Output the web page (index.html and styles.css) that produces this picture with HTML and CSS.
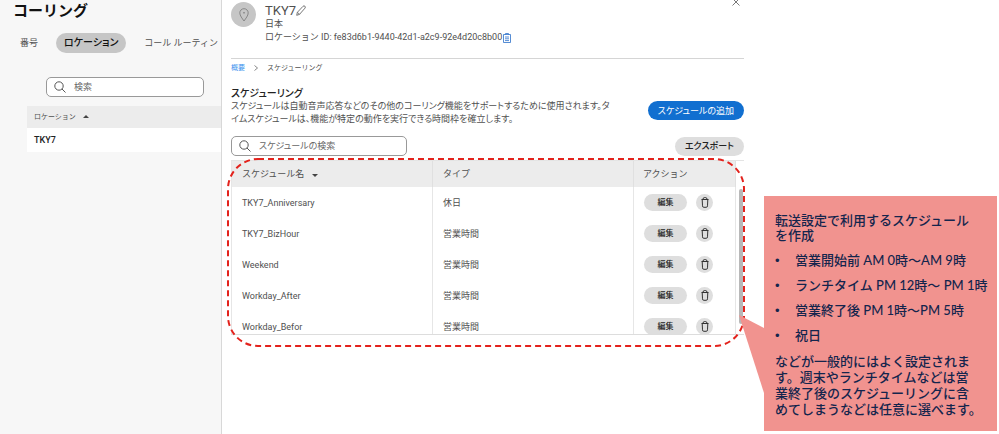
FILE: index.html
```html
<!DOCTYPE html>
<html lang="ja">
<head>
<meta charset="utf-8">
<title>コーリング</title>
<link rel="stylesheet" href="styles.css">
</head>
<body>
<svg class="defs" aria-hidden="true">
  <symbol id="search" viewBox="0 0 12 12"><circle cx="5" cy="5" r="4.2"/><path d="M8 8l3.5 3.5"/></symbol>
  <symbol id="trash" viewBox="0 0 8 11"><path d="M.5 2.5h7M2 2.300Q2 .6 3.300.6h1.400Q6 .6 6 2.300M1.200 2.600l.3 6.200q0 1.500 1.300 1.500h2.400q1.300 0 1.300-1.500l.3-6.200"/></symbol>
</svg>
<div class="page">
  <aside class="side">
    <h1>コーリング</h1>
    <nav class="tabs">
      <a href="#">番号</a>
      <a href="#" class="active">ロケーション</a>
      <a href="#">コール ルーティン</a>
    </nav>
    <label class="search side-search">
      <svg><use href="#search"/></svg>
      <input type="text" placeholder="検索" aria-label="検索">
    </label>
    <table class="locations">
      <thead><tr><th>ロケーション <i class="up"></i></th></tr></thead>
      <tbody><tr><td>TKY7</td></tr></tbody>
    </table>
  </aside>

  <main class="panel">
    <header class="head">
      <span class="avatar"><svg viewBox="0 0 10 14"><path d="M5 13C3.2 10.4.8 7.6.8 4.9a4.2 4.2 0 018.4 0C9.2 7.6 6.800 10.4 5 13z"/><circle cx="5" cy="4.800" r=".5"/></svg></span>
      <div class="info">
        <h2>TKY7<svg class="pencil" viewBox="0 0 10 11"><path d="M.7 10.300l.7-3L7 1.300q1-.9 1.900-.1t.1 1.900L3.500 9.400zM1.500 7.300l2 2"/></svg></h2>
        <p>日本</p>
        <p class="id">ロケーション ID: fe83d6b1-9440-42d1-a2c9-92e4d20c8b00<svg class="clip" viewBox="0 0 8 10"><path d="M.5 1.500h7v8h-7zM2.500 1.500V.5h3v1M2 4h4M2 5.800h4M2 7.600h4"/></svg></p>
      </div>
      <button class="close" aria-label="閉じる"><svg viewBox="0 0 8 8"><path d="M.5.5l7 7M7.500.5l-7 7"/></svg></button>
    </header>
    <nav class="crumbs">
      <a href="#">概要</a>
      <svg viewBox="0 0 4 6"><path d="M.5.5L3.500 3 .5 5.500"/></svg>
      <span>スケジューリング</span>
    </nav>
    <section class="intro">
      <div>
        <h3>スケジューリング</h3>
        <p>スケジュールは自動音声応答などのその他のコーリング機能をサポートするために使用されます。タ<br>イムスケジュールは、機能が特定の動作を実行できる時間枠を確立します。</p>
      </div>
      <button class="primary">スケジュールの追加</button>
    </section>
    <div class="tools">
      <label class="search table-search">
        <svg><use href="#search"/></svg>
        <input type="text" placeholder="スケジュールの検索" aria-label="スケジュールの検索">
      </label>
      <button class="export">エクスポート</button>
    </div>
    <div class="list">
      <div class="scroll">
        <table class="schedules">
          <thead><tr><th>スケジュール名 <i class="down"></i></th><th>タイプ</th><th class="act">アクション</th></tr></thead>
          <tbody>
            <tr><td>TKY7_Anniversary</td><td>休日</td><td><div class="actions"><button class="edit">編集</button><button class="del" aria-label="削除"><svg><use href="#trash"/></svg></button></div></td></tr>
            <tr><td>TKY7_BizHour</td><td>営業時間</td><td><div class="actions"><button class="edit">編集</button><button class="del" aria-label="削除"><svg><use href="#trash"/></svg></button></div></td></tr>
            <tr><td>Weekend</td><td>営業時間</td><td><div class="actions"><button class="edit">編集</button><button class="del" aria-label="削除"><svg><use href="#trash"/></svg></button></div></td></tr>
            <tr><td>Workday_After</td><td>営業時間</td><td><div class="actions"><button class="edit">編集</button><button class="del" aria-label="削除"><svg><use href="#trash"/></svg></button></div></td></tr>
            <tr><td>Workday_Befor</td><td>営業時間</td><td><div class="actions"><button class="edit">編集</button><button class="del" aria-label="削除"><svg><use href="#trash"/></svg></button></div></td></tr>
          </tbody>
        </table>
        <div class="track"><div class="thumb"></div></div>
      </div>
      <svg class="outline"><rect x="1" y="1" rx="30"/></svg>
    </div>
  </main>

  <aside class="note">
    <svg class="tail" viewBox="0 0 25 78"><path d="M0 0l25 13v65z"/></svg>
    <p>転送設定で利用するスケジュール<br>を作成</p>
    <ul>
      <li>営業開始前 AM 0時〜AM 9時</li>
      <li>ランチタイム PM 12時〜 PM 1時</li>
      <li>営業終了後 PM 1時〜PM 5時</li>
      <li>祝日</li>
    </ul>
    <p class="last">などが一般的にはよく設定されま<br>す。週末やランチタイムなどは営<br>業終了後のスケジューリングに含<br>めてしまうなどは任意に選べます。</p>
  </aside>
</div>
</body>
</html>
```
FILE: styles.css
```css
* { box-sizing: border-box; }
body {
  margin: 0;
  background: #fff;
  color: #505050;
  font: 9px/12px Roboto, "Noto Sans CJK JP", sans-serif;
}
h1, h2, h3, p, ul { margin: 0; padding: 0; }
a { color: inherit; text-decoration: none; }
button { border: 0; padding: 0; font: inherit; color: #222; white-space: nowrap; }
table { border-collapse: collapse; }
th, td { text-align: left; font-weight: 400; padding: 0; }
svg { fill: none; stroke: #555; flex: none; }
.defs { position: absolute; width: 0; height: 0; }
.page {
  display: grid;
  grid-template-columns: 222px minmax(0, 1fr) 255px;
  min-height: 100vh;
}

.side { background: #f7f7f7; border-right: 1px solid #d8d8d8; overflow: hidden; }
.side h1 { margin-left: 13px; font-size: 15px; line-height: 22px; color: #111; }
.tabs { display: flex; align-items: center; margin: 11px 0 0 20px; gap: 18px; white-space: nowrap; }
.tabs .active {
  padding: 4px 8px;
  border-radius: 10px;
  background: #c6c6c6;
  color: #111;
  font-size: 10px;
  font-weight: 500;
  font-feature-settings: "palt";
}
.search {
  display: flex;
  align-items: center;
  gap: 8px;
  height: 20px;
  padding: 0 7px;
  border: 1px solid #999;
  border-radius: 5px;
  background: #fff;
}
.search svg { width: 12px; height: 12px; }
.search input {
  flex: 1;
  min-width: 0;
  padding: 0;
  border: 0;
  outline: 0;
  background: none;
  font: inherit;
  font-feature-settings: "palt";
}
.search input::placeholder { color: #666; opacity: 1; }
.side-search { margin: 24px 17px 0 46px; }
.locations { width: calc(100% - 27px); margin: 9px 0 0 27px; }
.locations th { height: 22px; padding-left: 7px; background: #ececec; font-size: 7px; }
.locations td { height: 24px; padding-left: 7px; background: #fff; color: #222; font-weight: 500; }
i { display: inline-block; border: 3px solid transparent; }
.up { border-top: 0; border-bottom-color: #444; margin: 0 0 1px 5px; }
.down { border-bottom: 0; border-top-color: #444; margin-left: 5px; }

.panel { padding: 0 0 0 9px; }
.head { display: flex; align-items: flex-start; gap: 9px; height: 59px; border-bottom: 1px solid #d5d5d5; }
.avatar {
  display: flex;
  align-items: center;
  justify-content: center;
  width: 25px;
  height: 25px;
  margin-top: 2px;
  border-radius: 50%;
  background: #c6c6c6;
}
.avatar svg { width: 10px; height: 14px; stroke: #777; stroke-width: .8; }
.info { flex: 1; padding-top: 3px; }
.info h2 { display: flex; align-items: center; font-size: 13px; line-height: 15px; font-weight: 400; }
.info p { line-height: 13px; }
.pencil { width: 10px; height: 11px; stroke-width: .8; }
.info .id { display: flex; align-items: center; gap: 1px; }
.clip { width: 8px; height: 10px; stroke: #2b70c9; stroke-width: .8; }
.close { width: 8px; height: 8px; margin: -2px 4px 0 0; background: none; }
.close svg { display: block; width: 8px; height: 8px; stroke-width: .8; }
.crumbs { display: flex; align-items: center; gap: 9px; height: 18px; font-size: 7px; }
.crumbs a { color: #3b93ee; }
.crumbs svg { width: 4px; height: 6px; stroke-width: .7; }
.intro { display: flex; align-items: center; justify-content: space-between; margin-top: 10px; }
.intro h3 { font-size: 10px; font-weight: 500; color: #222; line-height: 13px; font-feature-settings: "palt"; }
.intro p { line-height: 13px; font-feature-settings: "palt"; white-space: nowrap; }
.primary, .export { height: 19px; padding: 0 10px; border-radius: 10px; font-feature-settings: "palt"; }
.primary { margin-top: 8px; background: #116fd0; color: #fff; }
.export { background: #dedede; font-weight: 500; }
.tools { display: flex; align-items: center; justify-content: space-between; margin-top: 10px; }
.table-search { width: 176px; }

.list { position: relative; margin-top: 4px; border-top: 1px solid #e4e4e4; }
.scroll { display: flex; max-height: 174px; overflow: hidden; border-bottom: 1px solid #ddd; }
.schedules { flex: 1; width: 100%; table-layout: fixed; border-left: 1px solid #e6e6e6; }
.schedules th { height: 26px; padding-left: 10px; background: #ececec; border-right: 1px solid #e0e0e0; }
.schedules td { height: 31px; padding-left: 10px; border-right: 1px solid #e6e6e6; }
.schedules .act { width: 102px; padding-left: 9px; }
.actions { display: flex; align-items: center; gap: 9px; }
.edit { width: 43px; height: 17px; border-radius: 9px; background: #dedede; font-size: 8px; font-weight: 500; }
.del { display: flex; align-items: center; justify-content: center; width: 17px; height: 17px; border-radius: 50%; background: #dedede; }
.del svg { width: 8px; height: 11px; stroke: #333; }
.track { flex: none; width: 8px; padding: 28px 1px 10px 3px; }
.thumb { height: 100%; border-radius: 2px; background: #b8b8b8; }
.outline { position: absolute; left: -4px; top: -3px; width: calc(100% + 5px); height: calc(100% + 15px); }
.outline rect {
  width: calc(100% - 2px);
  height: calc(100% - 2px);
  stroke: #e3221c;
  stroke-width: 2;
  stroke-dasharray: 6 4;
}

.note {
  position: relative;
  align-self: start;
  margin: 196px 2px 0 20px;
  padding: 17px 0 14px 11px;
  background: #f1938f;
  color: #14254d;
  font: 500 13px/15px Lato, "Noto Sans CJK JP", sans-serif;
  white-space: nowrap;
}
.tail { position: absolute; left: -25px; top: 119px; width: 25px; height: 78px; fill: #f1938f; stroke: none; }
.note ul { display: grid; gap: 10px; margin: 10px 0; list-style: none; }
.note li { display: flex; }
.note li::before { content: "•"; width: 20px; font-family: "Liberation Sans", sans-serif; }
.note .last { line-height: 16px; }
```
